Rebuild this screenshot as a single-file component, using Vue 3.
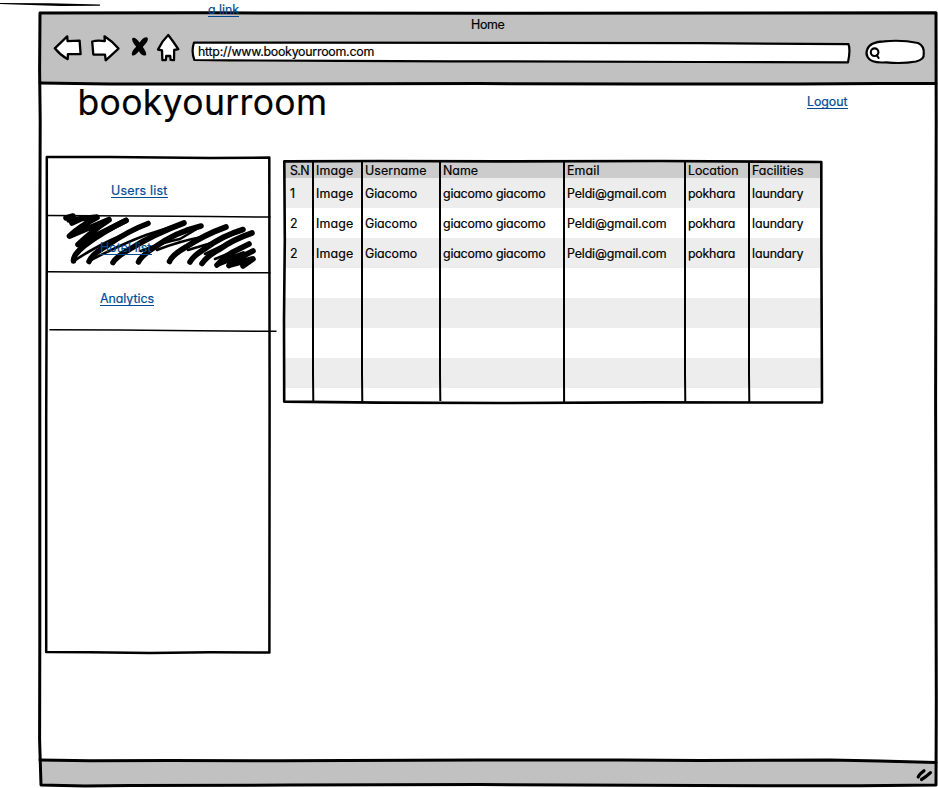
<script setup>
const columns = [
  { title: 'S.N', w: 19 },
  { title: 'Image', w: 37.5 },
  { title: 'Username', w: 61.5 },
  { title: 'Name', w: 35 },
  { title: 'Email', w: 32.5 },
  { title: 'Location', w: 50.5 },
  { title: 'Facilities', w: 51.5 },
]
const person = [
  { text: 'Image', w: 37.5 },
  { text: 'Giacomo', w: 52 },
  { text: 'giacomo giacomo', w: 102.5 },
  { text: 'Peldi@gmail.com', w: 99.5 },
  { text: 'pokhara', w: 47 },
  { text: 'laundary', w: 51.5 },
]
const rows = [
  [{ text: '1', w: 6 }, ...person],
  [{ text: '2', w: 7 }, ...person],
  [{ text: '2', w: 7 }, ...person],
  [], [], [], [], [],
]

// Tracks a label out or in so that it spans the given width.
const vFit = {
  mounted(el, { value }) {
    const natural = el.getBoundingClientRect().width
    el.style.letterSpacing = `${(value - natural) / el.textContent.length}px`
  },
}
</script>

<template>
  <div class="page">
    <svg class="ink" viewBox="0 0 938 788" width="938" height="788" aria-hidden="true">
      <!-- stray rule -->
      <path class="solid" d="M0 3 L50 3.3 L100 4.4 L100 5.8 L60 5.9 L30 4.9 L0 4Z" />
      <!-- window frame -->
      <g class="frame">
        <path d="M40 13 L210 12.8 L500 13.3 L936 12.8 L936.2 120 L935.6 400 L936.3 700 L936 785 L860 785.8 L700 785.6 L480 784.6 L290 785 L130 785.6 L85 786 L41 785 L39.6 740 L39.8 640 L39.8 400 L39.8 250 L40.2 120 L39.6 70Z" />
        <path d="M40 83 L110 84 L230 84 L480 83.6 L640 84 L800 84 L880 83.4 L936 83.5" />
        <path d="M40 760 L90 760.8 L170 760.6 L280 760.8 L480 760 L620 760 L700 760.4 L830 760 L880 761 L936 762.6" />
      </g>
      <!-- navigation icons -->
      <g class="icon">
        <path d="M54.8 48.3 L67.2 36.4 L67.6 41.2 L79.6 40.6 L80.6 54.2 L67.9 54.2 L67.7 59.2 Q60 55 54.8 48.3Z" />
        <path d="M92.2 41.5 Q97 40 104.8 41.1 L104.5 36.3 Q112 41 118.5 48.6 L105.7 60.3 L105 54.6 L93.3 54.5Z" />
        <path d="M168.2 35 Q173 41 178.3 49.2 L174.2 50 L174 60.2 L170.6 59.8 L170.2 55.8 L166.2 56 L165.9 60 L162.4 60.2 L162 50.3 L158 49.5 Q162 41 168.2 35Z" />
      </g>
      <path class="solid" d="M132.4 38 Q135.5 36.8 139.6 42.6 Q143 37 147 37.2 Q149 39 146.4 42.8 L142.8 47 Q146.6 52 146.2 55 Q142.4 57 138.9 51.2 Q134.5 56.5 132 55.2 Q130.6 52 136.2 46.8 Q131 40.5 132.4 38Z" />
      <!-- address field -->
      <path class="field" d="M194 42.5 L300 42.6 L530 42.8 L700 43.2 L848.5 44.2 Q850.6 50 848 62.3 L700 62 L450 61.3 L340 60.8 L230 60.4 L194.4 60 Q191 52 194 42.5Z" />
      <!-- search field -->
      <path class="field" d="M867 50 Q869 42 884 41.3 Q902 39.6 918 43 Q924.5 46 923.7 54 Q924.5 59.5 916 61.5 Q902 64 886 62.3 Q871 63.5 867.6 57 Q865.7 53.7 867 50Z" />
      <circle class="lens" cx="874.6" cy="52.2" r="3.8" />
      <path class="lens" d="M876.8 55.4 L878.6 58" />
      <!-- resize grip -->
      <path class="grip" d="M918.2 777 Q919 774.5 924 770.7 M921.5 779.5 Q926 777 930.5 772.7" />
      <!-- side panel -->
      <path class="box" d="M46.8 157 L110 157 L210 158 L269.3 157.6 L269.6 400 L269.4 652.5 L210 652.2 L150 653 L90 652.3 L46.2 652 L46.2 420 L46.8 260Z" />
      <g class="rule">
        <path d="M47 215.6 L140 215.9 L210 216.6 L270 217" />
        <path d="M47 271.8 L130 272.3 L210 272.8 L270 272.7" />
        <path d="M50 329.7 L120 330.1 L170 330.6 L276 331.3" />
      </g>
      <!-- crossed-out entry -->
      <g class="scribble">
        <path d="M66 218 L73 216 M69 220 L97 217 M72 223 L83 218 M69.5 236 Q80 226 97 217.5 M70 236 L109 219.5 M78 244.5 Q92 231 109 220 M79 244 L126 220.5" />
        <path d="M73.5 261 Q73 255 84 246 Q104 231 126 220.5 M89 261.5 Q92 254 108 245 Q128 231 148 223.5 M113 262.5 Q116 257 130 249 Q154 234 184 223 M138.5 262 Q141 256 155 247 Q176 232 201 226 M169.5 261.5 Q172 255 186 247 Q204 235 226 227 M190 262 Q193 256 206 248 Q222 236 243 229.5 M202 263.5 Q207 256 220 249 Q232 240 252 233" />
        <path d="M217 265 Q223 258 233 252 L249 244 M229 265.5 Q236 259 253 251 M243 266 L253 259 M218 264 L243 254 M230 265 L252 259" />
        <path class="thin" d="M74 261 Q96 246 120 236 L148 224 M91 260 Q122 244 146 235 L183 223 M141 251 Q160 243 180 239 L200 227 M157 250 Q180 241 202 237 L225 228 M188 250 L208 244 L242 231 M205 254 L226 244 L251 234 M215 259 L247 246" />
      </g>
      <!-- table -->
      <path class="box table-line" d="M284.3 161.4 L380 161 L500 161.4 L660 161 L821.3 162 L821.4 250 L822 402.5 L650 402.4 L500 403 L380 402.6 L284.2 401.6 L284 320 L284.8 240Z" />
      <path class="column-line" d="M313 162V374L313.3 402.5 M362 162V374L362.3 402.5 M440 162V374L440.3 401 M564 162V374L564.1 402 M685 162V374L685.3 402.5 M749 162V374L749.3 402.5" />
    </svg>

    <a class="link stray" v-fit="31">a link</a>

    <div class="window">
      <header class="chrome">
        <div class="tab"><span class="label" v-fit="33.5">Home</span></div>
        <div class="address"><span class="label" v-fit="176">http://www.bookyourroom.com</span></div>
      </header>
      <main class="content">
        <div class="masthead">
          <h1 class="label" v-fit="250">bookyourroom</h1>
          <a class="link" v-fit="40.5">Logout</a>
        </div>
        <div class="body">
          <nav class="side">
            <div class="entry first"><a class="link" v-fit="56.5">Users list</a></div>
            <div class="entry second"><a class="link" v-fit="51.5">Hotel list</a></div>
            <div class="entry third"><a class="link" v-fit="54">Analytics</a></div>
          </nav>
          <section class="grid">
            <div class="row head">
              <div v-for="c in columns" :key="c.title" class="cell">
                <span class="label" v-fit="c.w">{{ c.title }}</span>
              </div>
            </div>
            <div v-for="(r, i) in rows" :key="i" class="row line" :class="{ shaded: i % 2 === 0 }">
              <div v-for="(c, j) in r" :key="j" class="cell">
                <span class="label" v-fit="c.w">{{ c.text }}</span>
              </div>
            </div>
          </section>
        </div>
      </main>
      <footer class="status"></footer>
    </div>
  </div>
</template>

<style>
body {
  background: #fff;
}
</style>

<style scoped>
.page {
  position: relative;
  box-sizing: border-box;
  width: 938px;
  height: 788px;
  padding: 13px 2px 2px 40px;
  overflow: hidden;
  color: #000;
  font: 400 12.4px/16px Inter, Lato, sans-serif;
  font-feature-settings: 'cv11' 1;
}
.ink {
  position: absolute;
  inset: 0;
  fill: none;
  stroke-linecap: round;
  stroke-linejoin: round;
}
.solid { fill: #000; }
.frame { stroke: #000; stroke-width: 3; }
.icon { fill: #fff; stroke: #000; stroke-width: 2.3; }
.field { fill: #fff; stroke: #000; stroke-width: 2.2; }
.lens { stroke: #000; stroke-width: 2.1; }
.grip { stroke: #000; stroke-width: 3.2; }
.box { stroke: #000; stroke-width: 2.5; }
.table-line { stroke-width: 2.6; }
.rule { stroke: #000; stroke-width: 1.5; }
.column-line { stroke: #000; stroke-width: 2; stroke-linecap: butt; }
.scribble { stroke: #000; stroke-width: 5.6; }
.thin { stroke-width: 2.6; }

.label,
.link {
  position: relative;
  z-index: 1;
  display: inline-block;
  white-space: nowrap;
  -webkit-text-stroke: 0.2px currentColor;
}
.link {
  height: 15px;
  border-bottom: 1px solid #004b93;
  color: #004b93;
  line-height: 18px;
}
.stray {
  position: absolute;
  top: 1px;
  left: 208px;
}
.window {
  display: flex;
  flex-direction: column;
  height: 773px;
}
.chrome {
  flex: 0 0 71px;
  background: #c1c1c1;
}
.tab {
  padding: 4px 0 0 431px;
  height: 16px;
}
.address {
  padding: 11px 0 0 158px;
}
.content {
  flex: 1;
}
.masthead {
  display: flex;
  justify-content: space-between;
  height: 73px;
  padding: 0 88.5px 0 37.4px;
}
.masthead .link {
  margin-top: 9px;
}
h1 {
  margin: 0;
  font-size: 35.5px;
  font-weight: 400;
  line-height: 38px;
  -webkit-text-stroke-width: 0.9px;
}
.body {
  display: flex;
  gap: 15px;
  padding-left: 6px;
}
.side {
  width: 224px;
  height: 495px;
}
.entry {
  box-sizing: border-box;
  height: 57.5px;
}
.first { padding: 25px 0 0 65px; }
.second { padding: 24.5px 0 0 54px; }
.third { padding: 18px 0 0 54px; }
.grid {
  width: 537px;
  height: 241px;
  margin-top: 5px;
  overflow: hidden;
}
.row {
  display: grid;
  grid-template-columns: 28px 49px 78px 124px 121px 64px 73px;
  height: 30px;
  line-height: 32px;
}
.head {
  height: 16px;
  background: #ccc;
  line-height: 18px;
}
.shaded {
  background: #ededed;
}
.cell {
  padding-left: 3px;
}
.cell:first-child {
  padding-left: 5px;
}
.status {
  flex: 0 0 25px;
  background: #c1c1c1;
}
</style>
